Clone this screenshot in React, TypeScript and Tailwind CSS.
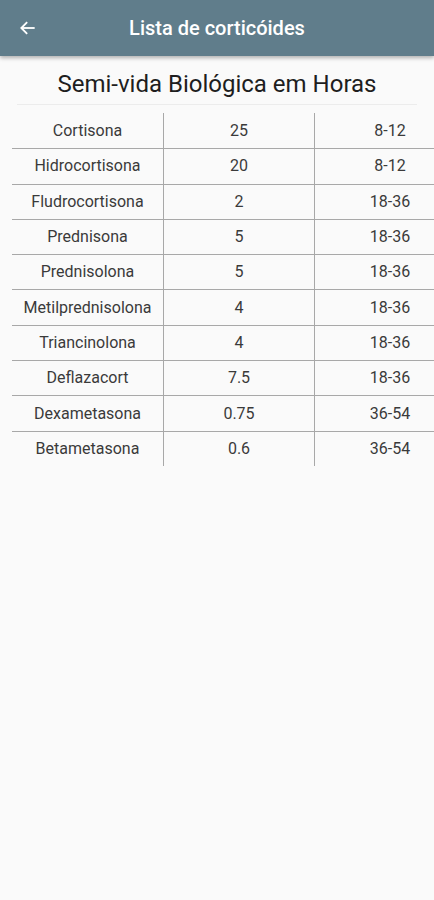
import React from "react";

const rows: [string, string, string][] = [
  ["Cortisona", "25", "8-12"],
  ["Hidrocortisona", "20", "8-12"],
  ["Fludrocortisona", "2", "18-36"],
  ["Prednisona", "5", "18-36"],
  ["Prednisolona", "5", "18-36"],
  ["Metilprednisolona", "4", "18-36"],
  ["Triancinolona", "4", "18-36"],
  ["Deflazacort", "7.5", "18-36"],
  ["Dexametasona", "0.75", "36-54"],
  ["Betametasona", "0.6", "36-54"],
];

export default function App() {
  return (
    <div className="w-[434px] h-[900px] overflow-hidden bg-[#fafafa] font-['Roboto',sans-serif]">
      <header className="relative h-14 bg-[#607d8b] flex items-center shadow-[0_2px_4px_rgba(0,0,0,0.3)]">
        <button className="w-14 h-14 flex items-center justify-center text-white">
          <svg width="20" height="20" viewBox="0 0 24 24" fill="none" stroke="currentColor" strokeWidth="2.2">
            <path d="M20 12H5" />
            <path d="M11 5l-7 7 7 7" />
          </svg>
        </button>
        <h1 className="absolute left-0 right-0 text-center text-white text-[20px] font-medium pointer-events-none">
          Lista de corticóides
        </h1>
      </header>

      <div className="pt-[13px] px-[17px]">
        <h2 className="text-center text-[24px] text-[#1e1e1e] leading-[30px]">
          Semi-vida Biológica em Horas
        </h2>
        <div className="mt-[5px] h-px bg-[#ececec]" />
      </div>

      <div className="mt-2 ml-3 w-[453px]">
        {rows.map(([name, value, range], i) => (
          <div
            key={name}
            className={`grid grid-cols-3 h-[35.3px] text-[16px] text-[#3a3a3a] ${
              i > 0 ? "border-t border-[#a8a8a8]" : ""
            }`}
          >
            <div className="flex items-center justify-center">{name}</div>
            <div className="flex items-center justify-center border-l border-[#a8a8a8]">{value}</div>
            <div className="flex items-center justify-center border-l border-[#a8a8a8]">{range}</div>
          </div>
        ))}
      </div>
    </div>
  );
}
